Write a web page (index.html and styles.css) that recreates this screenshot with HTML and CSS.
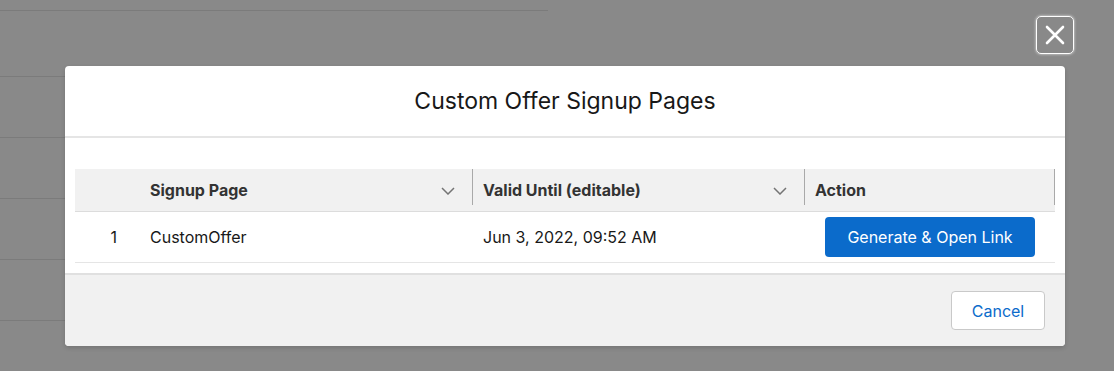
FILE: index.html
```html
<!DOCTYPE html>
<html lang="en">
<head>
  <meta charset="UTF-8">
  <meta name="viewport" content="width=device-width, initial-scale=1.0">
  <title>Custom Offer Signup Pages</title>
  <link rel="stylesheet" href="styles.css">
</head>
<body>
  <div class="backdrop-list">
    <div class="backdrop-row first"></div>
    <div class="backdrop-row"></div>
    <div class="backdrop-row"></div>
    <div class="backdrop-row"></div>
    <div class="backdrop-row"></div>
    <div class="backdrop-row"></div>
  </div>

  <div class="modalWrap">
    <button class="btnClose" title="Close">
      <svg width="20" height="20" viewBox="0 0 20 20">
        <path d="M2 2 L18 18 M18 2 L2 18" stroke="#fff" stroke-width="2.6" stroke-linecap="round"/>
      </svg>
    </button>

    <section class="modal">
      <header class="modal-header">
        <h2>Custom Offer Signup Pages</h2>
      </header>

      <div class="modal-body">
        <table class="data-table">
          <thead>
            <tr>
              <th class="col-num"></th>
              <th class="col-page">
                <div class="th-inner">
                  <span>Signup Page</span>
                  <svg class="chevron" width="14" height="8" viewBox="0 0 14 8"><path d="M1 1 L7 7 L13 1" fill="none" stroke="#747474" stroke-width="1.5"/></svg>
                </div>
              </th>
              <th class="col-valid">
                <div class="th-inner">
                  <span>Valid Until (editable)</span>
                  <svg class="chevron" width="14" height="8" viewBox="0 0 14 8"><path d="M1 1 L7 7 L13 1" fill="none" stroke="#747474" stroke-width="1.5"/></svg>
                </div>
              </th>
              <th class="col-action">Action</th>
            </tr>
          </thead>
          <tbody>
            <tr>
              <td class="col-num">1</td>
              <td>CustomOffer</td>
              <td>Jun 3, 2022, 09:52 AM</td>
              <td class="cell-action"><button class="btnBrand">Generate &amp; Open Link</button></td>
            </tr>
          </tbody>
        </table>
      </div>

      <footer class="modal-footer">
        <button class="btnNeutral">Cancel</button>
      </footer>
    </section>
  </div>
</body>
</html>
```

FILE: styles.css
```css
body {
  margin: 0;
  height: 371px;
  background-color: #898989;
  font-family: Inter, "Noto Sans", Arial, sans-serif;
  overflow: hidden;
}
.backdrop-list {
  width: 548px;
}
.backdrop-row {
  height: 60px;
  border-bottom: 1px solid #7b7b7b;
}
.backdrop-row.first {
  height: 10px;
  margin-bottom: 5px;
}
.modalWrap {
  position: absolute;
  top: 16px;
  left: 65px;
  width: 1000px;
  display: flex;
  flex-direction: column;
  align-items: flex-end;
}
.btnClose {
  width: 38px;
  height: 38px;
  margin-right: -9px;
  margin-bottom: 12px;
  padding: 0;
  display: flex;
  align-items: center;
  justify-content: center;
  background: transparent;
  border: 1px solid #fff;
  border-radius: 5px;
  box-shadow: 0 0 3px rgba(255, 255, 255, 0.8);
  cursor: pointer;
}
.modal {
  width: 1000px;
  background: #fff;
  border-radius: 4px;
  box-shadow: 0 2px 4px rgba(0, 0, 0, 0.15);
}
.modal-header {
  height: 70px;
  border-bottom: 2px solid #e5e5e5;
  display: flex;
  align-items: center;
  justify-content: center;
}
.modal-header h2 {
  margin: 0;
  font-size: 23px;
  font-weight: 400;
  color: #181818;
}
.modal-body {
  padding: 31px 10px 10px;
}
.data-table {
  width: 980px;
  border-collapse: collapse;
  table-layout: fixed;
  font-size: 16px;
  color: #181818;
}
.data-table th {
  height: 42px;
  padding: 0 10px;
  background: #f1f1f1;
  border-bottom: 1px solid #dcdcdc;
  text-align: left;
  font-weight: 700;
  color: #333;
}
.data-table th.col-page,
.data-table th.col-valid,
.data-table th.col-action {
  background-image: linear-gradient(#a9a9a9, #a9a9a9);
  background-size: 1px 36px;
  background-repeat: no-repeat;
  background-position: right top;
}
.col-num { width: 45px; }
.col-page { width: 313px; }
.col-valid { width: 312px; }
.th-inner {
  display: flex;
  align-items: center;
  justify-content: space-between;
  padding-right: 8px;
}
.chevron {
  margin-top: 2px;
}
.data-table td {
  height: 50px;
  padding: 0 10px;
  border-bottom: 1px solid #e5e5e5;
}
.data-table td.col-num {
  text-align: right;
  padding-right: 23px;
}
.cell-action {
  padding-left: 20px !important;
}
.btnBrand {
  width: 210px;
  height: 40px;
  border: none;
  border-radius: 4px;
  background-color: #0b6bcb;
  color: #fff;
  font-family: inherit;
  font-size: 16px;
  cursor: pointer;
}
.modal-footer {
  height: 55px;
  padding: 16px 20px 0;
  background: #f1f1f1;
  border-top: 2px solid #e0e0e0;
  border-radius: 0 0 4px 4px;
  display: flex;
  justify-content: flex-end;
  align-items: flex-start;
}
.btnNeutral {
  width: 94px;
  height: 39px;
  background: #fff;
  border: 1px solid #c9c9c9;
  border-radius: 4px;
  color: #0b6bcb;
  font-family: inherit;
  font-size: 16px;
  cursor: pointer;
}
```
